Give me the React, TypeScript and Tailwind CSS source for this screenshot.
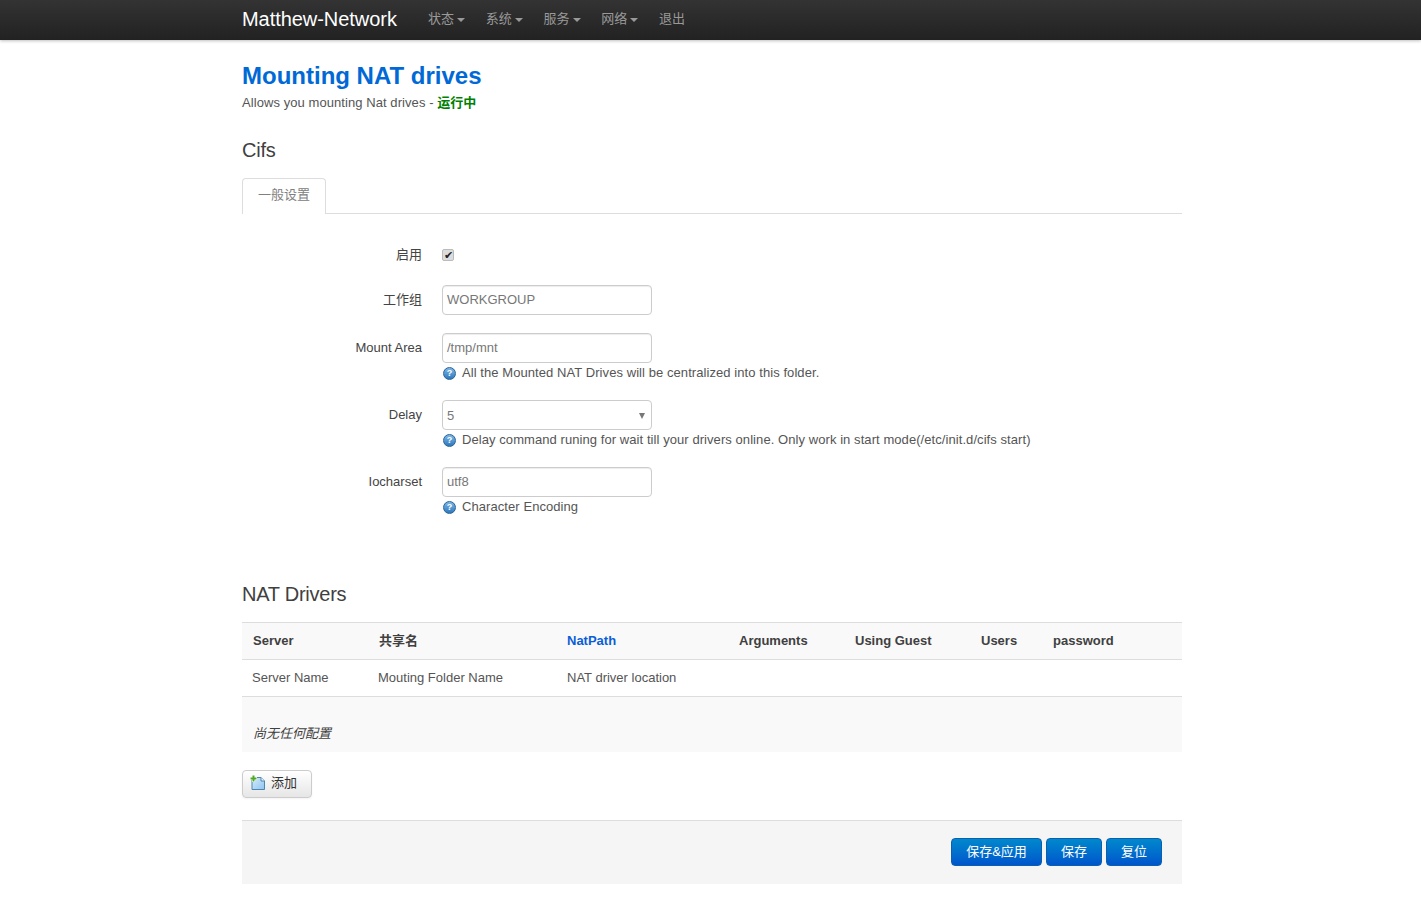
import React from 'react';

const FONT = "font-['Liberation_Sans','Noto_Sans_CJK_SC',sans-serif]";

const NAV_ITEMS = ['状态', '系统', '服务', '网络'];

const COLUMNS = [
  { head: 'Server', sub: 'Server Name' },
  { head: '共享名', sub: 'Mouting Folder Name' },
  { head: 'NatPath', sub: 'NAT driver location', link: true },
  { head: 'Arguments', sub: '' },
  { head: 'Using Guest', sub: '' },
  { head: 'Users', sub: '' },
  { head: 'password', sub: '' },
];

const HelpIcon = () => (
  <span className="ml-[1px] inline-flex h-[13px] w-[13px] shrink-0 items-center justify-center rounded-full border border-[#2a6396] bg-gradient-to-b from-[#7db8e8] to-[#2a78bd] text-[9px] leading-none font-bold text-white">
    ?
  </span>
);

const Help = ({ children }: { children: React.ReactNode }) => (
  <div className="mt-[1px] flex h-[18px] items-center gap-[6px] text-[13px] leading-[18px] tracking-[0.07px] whitespace-nowrap text-[#555]">
    <HelpIcon />
    <span className="-mt-[1px]">{children}</span>
  </div>
);

const Row = ({ label, className, labelClass, children }: { label: string; className?: string; labelClass?: string; children: React.ReactNode }) => (
  <div className={`flex ${className ?? ''}`}>
    <label className={`mr-5 w-[180px] shrink-0 text-right text-[13px] leading-5 text-[#444] ${labelClass ?? 'pt-[5px]'}`}>{label}</label>
    <div>{children}</div>
  </div>
);

const TextInput = ({ value }: { value: string }) => (
  <div className="flex h-[30px] w-[210px] items-center rounded-[4px] border border-[#ccc] bg-white px-1 text-[13px] text-[#777] shadow-[inset_0_1px_1px_rgba(0,0,0,0.075)]">
    {value}
  </div>
);

const AddIcon = () => (
  <svg width="16" height="16" viewBox="0 0 16 16">
    <defs>
      <linearGradient id="addDoc" x1="0" y1="0" x2="1" y2="1">
        <stop offset="0" stopColor="#d6ecfc" />
        <stop offset="1" stopColor="#8fc4f0" />
      </linearGradient>
    </defs>
    <path d="M3.5 2.5H11L14.5 6V14.5H2V4" fill="url(#addDoc)" stroke="#4f86ad" />
    <path d="M11 2.5V6H14.5" fill="#eef7fe" stroke="#4f86ad" />
    <path d="M3.5 0V7M0 3.5H7" stroke="#ffffff" strokeWidth="3" />
    <path d="M3.5 0.5V6.5M0.5 3.5H6.5" stroke="#4fa82a" strokeWidth="2" />
  </svg>
);

const BlueButton = ({ children, className }: { children: React.ReactNode; className: string }) => (
  <button className={`h-7 rounded-[4px] border border-[#0a5fb0] bg-gradient-to-b from-[#0088cc] to-[#0055cc] pb-[1px] text-[13px] leading-none text-white ${className}`}>
    {children}
  </button>
);

export default function App() {
  return (
    <div className={`min-h-[900px] bg-white ${FONT}`}>
      {/* 顶部导航 */}
      <div className="h-10 bg-gradient-to-b from-[#333] to-[#222] shadow-[0_1px_3px_rgba(0,0,0,0.25)]">
        <div className="ml-[242px] flex h-10 w-[940px] items-center">
          <a className="w-[186px] pb-[3px] text-[20px] leading-none tracking-[-0.05px] text-white">Matthew-Network</a>
          {NAV_ITEMS.map((item) => (
            <span key={item} className="mr-[20.75px] flex items-center gap-[3px] pb-[2px] text-[13px] text-[#999]">
              {item}
              <span className="mt-[1px] h-0 w-0 border-x-4 border-t-4 border-x-transparent border-t-[#999]" />
            </span>
          ))}
          <span className="pb-[2px] text-[13px] text-[#999]">退出</span>
        </div>
      </div>

      <div className="ml-[242px] w-[940px] pt-5">
        <h1 className="text-[24px] leading-8 font-bold text-[#0069d6]">Mounting NAT drives</h1>
        <p className="mt-[1px] text-[13px] leading-5 tracking-[0.07px] text-[#555]">
          Allows you mounting Nat drives - <b className="text-[#008000]">运行中</b>
        </p>

        <h2 className="mt-[22px] text-[20px] leading-[30px] tracking-[-0.25px] text-[#404040]">Cifs</h2>

        {/* 标签页 */}
        <div className="mt-[13px] h-9 border-b border-[#ddd]">
          <div className="flex h-9 w-[84px] items-center justify-center rounded-t-[4px] border border-b-0 border-[#ddd] bg-white pb-[3px] text-[13px] text-[#808080]">
            一般设置
          </div>
        </div>

        <Row label="启用" className="mt-[31px] h-5 items-center" labelClass="">
          <div className="flex h-3 w-3 items-center justify-center rounded-[2px] border border-[#bbb] bg-[#dcdcdc] text-[11px] leading-none text-[#222]">
            ✔
          </div>
        </Row>

        <Row label="工作组" className="mt-5">
          <TextInput value="WORKGROUP" />
        </Row>

        <Row label="Mount Area" className="mt-[18px]">
          <TextInput value="/tmp/mnt" />
          <Help>All the Mounted NAT Drives will be centralized into this folder.</Help>
        </Row>

        <Row label="Delay" className="mt-[18px]">
          <div className="flex h-[30px] w-[210px] items-center justify-between rounded-[4px] border border-[#ccc] bg-white px-1 pt-[1px] pr-[6px] text-[13px] text-[#777]">
            5
            <span className="h-0 w-0 border-x-[3px] border-t-[6px] border-x-transparent border-t-[#777]" />
          </div>
          <Help>Delay command runing for wait till your drivers online. Only work in start mode(/etc/init.d/cifs start)</Help>
        </Row>

        <Row label="Iocharset" className="mt-[18px]">
          <TextInput value="utf8" />
          <Help>Character Encoding</Help>
        </Row>

        <h2 className="mt-[63px] text-[20px] leading-[30px] tracking-[-0.25px] text-[#404040]">NAT Drivers</h2>

        {/* 表格 */}
        <div className="mt-[13px] grid h-[38px] grid-cols-[126px_189px_172px_116px_126px_72px_139px] items-center border-y border-[#ddd] bg-[#f9f9f9] pb-[1px] text-[13px] font-bold text-[#404040]">
          {COLUMNS.map((col, i) => (
            <div key={col.head} className={`${i < 2 ? 'pl-[11px]' : 'pl-[10px]'} ${col.link ? 'text-[#0b5ed7]' : ''}`}>
              {col.head}
            </div>
          ))}
        </div>
        <div className="grid h-[37px] grid-cols-[126px_189px_172px_116px_126px_72px_139px] items-center border-b border-[#ddd] pb-[1px] text-[13px] text-[#555]">
          {COLUMNS.map((col) => (
            <div key={col.head} className="pl-[10px]">
              {col.sub}
            </div>
          ))}
        </div>
        <div className="flex h-[55px] items-end bg-[#f9f9f9] pb-[9px] pl-[11px] text-[13px] text-[#404040] italic">
          尚无任何配置
        </div>

        <button className="mt-[18px] flex h-7 w-[70px] items-center gap-[5px] rounded-[4px] border border-[#ccc] bg-gradient-to-b from-white to-[#e6e6e6] pb-[2px] pl-[7px] text-[13px] text-[#333] shadow-[0_1px_2px_rgba(0,0,0,0.05)]">
          <AddIcon />
          添加
        </button>

        {/* 底部操作栏 */}
        <div className="mt-[22px] flex h-16 items-center justify-end gap-1 border-t border-[#ddd] bg-[#f5f5f5] pr-5 pb-[2px]">
          <BlueButton className="w-[91px]">保存&amp;应用</BlueButton>
          <BlueButton className="w-14">保存</BlueButton>
          <BlueButton className="w-14">复位</BlueButton>
        </div>
      </div>
    </div>
  );
}
